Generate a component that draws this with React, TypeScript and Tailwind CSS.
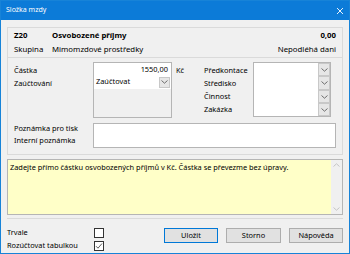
import React from "react";

const Chevron = () => (
  <svg width="7" height="4" viewBox="0 0 7 4" className="block">
    <path d="M0.5 0.5 L3.5 3.2 L6.5 0.5" fill="none" stroke="#606060" strokeWidth="0.9" />
  </svg>
);

const DropBtn = ({ className = "" }: { className?: string }) => (
  <div className={"flex items-center justify-center border border-[#c8c8c8] bg-[#e6e6e6] " + className}>
    <Chevron />
  </div>
);

const Checkbox = ({ checked }: { checked?: boolean }) => (
  <div className="w-[10px] h-[10px] border border-[#333] bg-white flex items-center justify-center">
    {checked && (
      <svg width="8" height="8" viewBox="0 0 8 8">
        <path d="M1 4.2 L3 6.2 L7 1.5" fill="none" stroke="#333" strokeWidth="0.8" />
      </svg>
    )}
  </div>
);

export default function App() {
  return (
    <div
      className="w-[350px] h-[254px] border border-[#1783d8] bg-[#f0f0f0] text-[7.4px] text-black flex flex-col overflow-hidden"
      style={{ fontFamily: '"Noto Sans", "Open Sans", sans-serif' }}
    >
      {/* title bar */}
      <div className="h-[19px] shrink-0 bg-[#0c7bd8] text-white flex items-center justify-between pl-[5px] pr-[5px]">
        <span className="text-[7px]">Složka mzdy</span>
        <svg width="8" height="8" viewBox="0 0 8 8">
          <path d="M1 1 L7 7 M7 1 L1 7" stroke="#ffffff" strokeWidth="0.9" />
        </svg>
      </div>

      <div className="px-[6px] flex flex-col">
        {/* header panel */}
        <div className="mt-[7px] h-[31px] border border-[#dadada] px-[6px] pt-[1px] flex flex-col text-[7.8px]">
          <div className="h-[14px] flex items-center font-bold">
            <span className="w-[38px]">Z20</span>
            <span className="flex-1">Osvobozené příjmy</span>
            <span>0,00</span>
          </div>
          <div className="h-[14px] flex items-center">
            <span className="w-[38px]">Skupina</span>
            <span className="flex-1">Mimomzdové prostředky</span>
            <span>Nepodléhá dani</span>
          </div>
        </div>

        {/* main panel */}
        <div className="h-[97px] border border-t-0 border-[#dadada] pl-[6px] pt-[4px] flex flex-col">
          <div className="flex">
            <div className="w-[79px] pt-[2px]">
              <div className="h-[13px] flex items-center">Částka</div>
              <div className="h-[13px] flex items-center">Zaúčtování</div>
            </div>
            <div className="w-[79px] h-[56px] border border-[#b5b5b5] flex flex-col">
              <div className="h-[12px] bg-white text-right pr-[3px] leading-[12px]">1550,00</div>
              <div className="h-[14px] bg-white flex items-center justify-between pl-[2px] pr-[1px]">
                <span>Zaúčtovat</span>
                <DropBtn className="w-[11px] h-[11px]" />
              </div>
            </div>
            <div className="w-[32px] pl-[4px] pt-[2px]">
              <div className="h-[13px] flex items-center">Kč</div>
            </div>
            <div className="w-[49px] pt-[2px]">
              <div className="h-[13px] flex items-center">Předkontace</div>
              <div className="h-[13px] flex items-center">Středisko</div>
              <div className="h-[13px] flex items-center">Činnost</div>
              <div className="h-[13px] flex items-center">Zakázka</div>
            </div>
            <div className="w-[78px] h-[55px] border border-[#b5b5b5] flex">
              <div className="flex-1 bg-white" />
              <div className="w-[12px] flex flex-col">
                <DropBtn className="h-[13px]" />
                <DropBtn className="h-[14px]" />
                <DropBtn className="h-[13px]" />
                <DropBtn className="h-[13px]" />
              </div>
            </div>
          </div>

          <div className="flex mt-[5px]">
            <div className="w-[79px]">
              <div className="h-[12px] flex items-center">Poznámka pro tisk</div>
              <div className="h-[12px] flex items-center">Interní poznámka</div>
            </div>
            <div className="w-[243px] h-[25px] border border-[#b5b5b5] bg-white" />
          </div>
        </div>

        {/* hint box */}
        <div className="mt-[4px] h-[56px] border border-[#b5b5b5] flex">
          <div className="flex-1 bg-[#ffffc8] px-[2px] pt-[1px] leading-[12px]">
            Zadejte přímo částku osvobozených příjmů v Kč. Částka se převezme bez úpravy.
          </div>
          <div className="w-[11px] bg-[#f0f0f0] flex flex-col items-center justify-between py-[3px]">
            <svg width="7" height="4" viewBox="0 0 7 4">
              <path d="M0.5 3.5 L3.5 0.8 L6.5 3.5" fill="none" stroke="#c0c0c0" strokeWidth="0.9" />
            </svg>
            <svg width="7" height="4" viewBox="0 0 7 4">
              <path d="M0.5 0.5 L3.5 3.2 L6.5 0.5" fill="none" stroke="#c0c0c0" strokeWidth="0.9" />
            </svg>
          </div>
        </div>
      </div>

      {/* separator */}
      <div className="mt-[3px] mx-[6px] border-t border-[#dadada]" />

      {/* bottom */}
      <div className="flex pl-[6px] pt-[7px]">
        <div className="w-[87px]">
          <div className="h-[13px] flex items-center">Trvale</div>
          <div className="h-[13px] flex items-center">Rozúčtovat tabulkou</div>
        </div>
        <div className="w-[70px]">
          <div className="h-[13px] flex items-center"><Checkbox /></div>
          <div className="h-[13px] flex items-center"><Checkbox checked /></div>
        </div>
        <div className="flex gap-[8px] pt-[2px]">
          <button className="w-[54px] h-[15px] border border-[#0078d7] bg-[#e1e1e1] text-[7.4px] leading-none">Uložit</button>
          <button className="w-[55px] h-[15px] border border-[#adadad] bg-[#e1e1e1] text-[7.4px] leading-none">Storno</button>
          <button className="w-[54px] h-[15px] border border-[#adadad] bg-[#e1e1e1] text-[7.4px] leading-none">Nápověda</button>
        </div>
      </div>
    </div>
  );
}
